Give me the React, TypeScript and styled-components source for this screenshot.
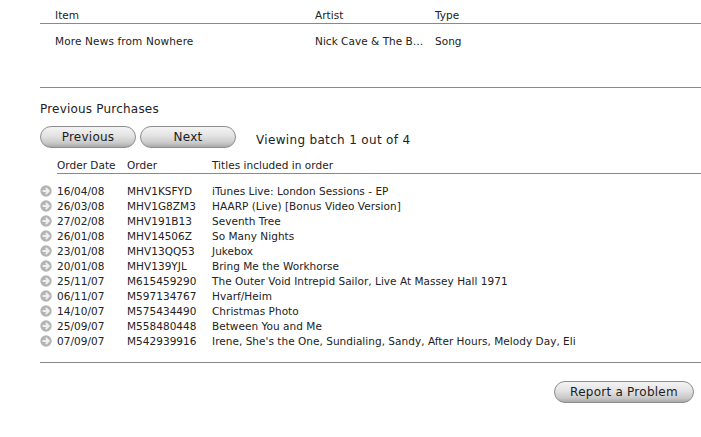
import React, { FC } from 'react'
import styled, { createGlobalStyle } from 'styled-components'

const GlobalStyle = createGlobalStyle`
  html, body {
    margin: 0;
    padding: 0;
    background: #fff;
  }
  body {
    font-family: "DejaVu Sans", "Liberation Sans", sans-serif;
    font-size: 10.5px;
    letter-spacing: 0.03px;
    color: #222;
  }
`

const Page = styled.div`
  width: 701px;
  height: 437px;
  padding-left: 40px;
  box-sizing: border-box;
  overflow: hidden;
`

const ItemGrid = styled.div`
  display: grid;
  grid-template-columns: 260px 120px 1fr;
  padding-left: 15px;
  align-items: center;
  box-sizing: border-box;
  border-bottom: 1px solid #8a8a8a;
`

const ItemHeader = styled(ItemGrid)`
  height: 24px;
  padding-top: 6px;
`

const ItemRow = styled(ItemGrid)`
  height: 64px;
  padding-bottom: 30px;
`

const ItemName = styled.span`
  letter-spacing: 0.14px;
`

const SectionTitle = styled.h2`
  margin: 13px 0 0;
  font-size: 12px;
  font-weight: 400;
  line-height: 16px;
  letter-spacing: 0.2px;
`

const Toolbar = styled.div`
  display: flex;
  align-items: center;
  margin-top: 9px;
  gap: 4px;
`

const Pill = styled.button<{ $width: number }>`
  width: ${p => p.$width}px;
  height: 22px;
  padding: 0;
  border: 1px solid #8d8d8d;
  border-radius: 11px;
  background: linear-gradient(#f4f4f4 0%, #e2e2e2 45%, #c9c9c9 80%, #a9a9a9 100%);
  font-family: inherit;
  font-size: 12px;
  color: #1c1c1c;
  letter-spacing: 0.25px;
`

const BatchLabel = styled.span`
  margin-left: 16px;
  padding-top: 5px;
  font-size: 12px;
  letter-spacing: 0.33px;
`

const OrderGrid = styled.div`
  display: grid;
  grid-template-columns: 70px 85px 1fr;
  align-items: center;
`

const OrderHeader = styled(OrderGrid)`
  margin: 8px 0 0 17px;
  height: 17px;
  border-bottom: 1px solid #8a8a8a;
`

const OrderList = styled.div`
  margin-top: 9px;
`

const OrderRow = styled.div`
  display: grid;
  grid-template-columns: 17px 70px 85px 1fr;
  align-items: center;
  height: 15px;
  white-space: nowrap;
`

const Arrow = styled.svg`
  display: block;
  width: 12px;
  height: 12px;
`

const Footer = styled.div`
  margin-top: 14px;
  border-top: 1px solid #8a8a8a;
  padding: 18px 7px 0 0;
  display: flex;
  justify-content: flex-end;
`

const orders = [
  ['16/04/08', 'MHV1KSFYD', 'iTunes Live: London Sessions - EP'],
  ['26/03/08', 'MHV1G8ZM3', 'HAARP (Live) [Bonus Video Version]'],
  ['27/02/08', 'MHV191B13', 'Seventh Tree'],
  ['26/01/08', 'MHV14506Z', 'So Many Nights'],
  ['23/01/08', 'MHV13QQ53', 'Jukebox'],
  ['20/01/08', 'MHV139YJL', 'Bring Me the Workhorse'],
  ['25/11/07', 'M615459290', 'The Outer Void Intrepid Sailor, Live At Massey Hall 1971'],
  ['06/11/07', 'M597134767', 'Hvarf/Heim'],
  ['14/10/07', 'M575434490', 'Christmas Photo'],
  ['25/09/07', 'M558480448', 'Between You and Me'],
  ['07/09/07', 'M542939916', "Irene, She's the One, Sundialing, Sandy, After Hours, Melody Day, Eli"],
]

const ArrowIcon: FC = () => (
  <Arrow viewBox="0 0 12 12">
    <circle cx="6" cy="6" r="5.7" fill="#b4b4b4" />
    <path d="M2.6 6H8.6M5.8 3 8.8 6 5.8 9" fill="none" stroke="#f0f0f0" strokeWidth="1.9" />
  </Arrow>
)

const App: FC = () => (
  <Page>
    <GlobalStyle />
    <ItemHeader>
      <span>Item</span>
      <span>Artist</span>
      <span>Type</span>
    </ItemHeader>
    <ItemRow>
      <ItemName>More News from Nowhere</ItemName>
      <span>Nick Cave &amp; The B…</span>
      <span>Song</span>
    </ItemRow>
    <SectionTitle>Previous Purchases</SectionTitle>
    <Toolbar>
      <Pill $width={96}>Previous</Pill>
      <Pill $width={96}>Next</Pill>
      <BatchLabel>Viewing batch 1 out of 4</BatchLabel>
    </Toolbar>
    <OrderHeader>
      <span>Order Date</span>
      <span>Order</span>
      <span>Titles included in order</span>
    </OrderHeader>
    <OrderList>
      {orders.map(([date, id, titles]) => (
        <OrderRow key={id}>
          <ArrowIcon />
          <span>{date}</span>
          <span>{id}</span>
          <span>{titles}</span>
        </OrderRow>
      ))}
    </OrderList>
    <Footer>
      <Pill $width={140}>Report a Problem</Pill>
    </Footer>
  </Page>
)

export default App
